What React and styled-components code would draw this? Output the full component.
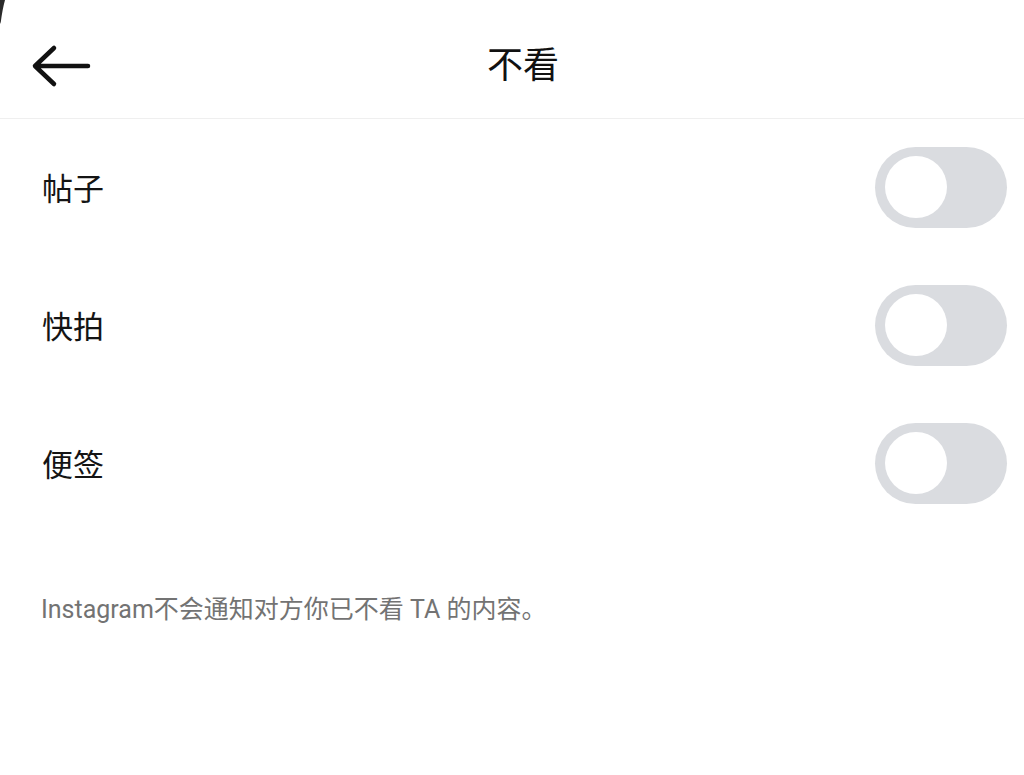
import React, { useState } from "react";
import styled, { createGlobalStyle } from "styled-components";

const Global = createGlobalStyle`
  html, body { margin: 0; padding: 0; background: #ffffff; }
  body { font-family: Roboto, "Noto Sans CJK SC", sans-serif; }
`;

const Page = styled.div`
  position: relative;
  width: 1024px;
  height: 775px;
  background: #ffffff;
  overflow: hidden;
`;

const CornerMark = styled.svg`
  position: absolute;
  left: 0;
  top: 0;
`;

const Header = styled.header`
  position: relative;
  height: 118px;
  display: flex;
  align-items: center;
  justify-content: center;
  border-bottom: 1px solid #efefef;
`;

const BackButton = styled.button`
  position: absolute;
  left: 30px;
  top: 44px;
  width: 62px;
  height: 46px;
  padding: 0;
  border: none;
  background: none;
  display: flex;
  align-items: center;
  justify-content: center;
`;

const Title = styled.h1`
  margin: 0;
  font-family: "Noto Sans CJK SC", sans-serif;
  font-size: 36px;
  font-weight: 400;
  color: #111111;
  line-height: 1;
  transform: translate(11px, 3px);
`;

const List = styled.div`
  display: flex;
  flex-direction: column;
`;

const Row = styled.div`
  height: 138px;
  display: flex;
  align-items: center;
  justify-content: space-between;
  padding: 0 17px 0 42px;
`;

const Label = styled.span`
  font-family: "Noto Sans CJK SC", sans-serif;
  font-size: 31px;
  color: #141414;
  line-height: 1;
  transform: translateY(-2px);
`;

const Track = styled.button`
  width: 132px;
  height: 81px;
  border-radius: 41px;
  border: none;
  padding: 0 10px;
  background: ${(p) => (p.$on ? "#0095f6" : "#dadce0")};
  display: flex;
  align-items: center;
  justify-content: ${(p) => (p.$on ? "flex-end" : "flex-start")};
  cursor: pointer;
  transform: translateY(-1px);
`;

const Knob = styled.span`
  width: 62px;
  height: 62px;
  border-radius: 50%;
  background: #ffffff;
`;

const Note = styled.p`
  margin: 0;
  padding: 60px 0 0 41px;
  font-family: Roboto, "Noto Sans CJK SC", sans-serif;
  font-size: 25px;
  line-height: 34px;
  color: #737373;
`;

const items = ["帖子", "快拍", "便签"];

export default function App() {
  const [state, setState] = useState([false, false, false]);
  return (
    <Page>
      <Global />
      <CornerMark width="6" height="24" viewBox="0 0 6 24">
        <path d="M0 0 L5 0 Q2.5 9 0.8 22 L0 24 Z" fill="#2a2a2a" />
      </CornerMark>
      <Header>
        <BackButton aria-label="返回">
          <svg width="62" height="46" viewBox="0 0 62 46">
            <path
              d="M5 22 H58 M24 4 L5 22 L24 40"
              fill="none"
              stroke="#111111"
              strokeWidth="4.5"
              strokeLinecap="round"
              strokeLinejoin="round"
            />
          </svg>
        </BackButton>
        <Title>不看</Title>
      </Header>
      <List>
        {items.map((t, i) => (
          <Row key={t}>
            <Label>{t}</Label>
            <Track
              $on={state[i]}
              onClick={() =>
                setState((s) => s.map((v, j) => (j === i ? !v : v)))
              }
            >
              <Knob />
            </Track>
          </Row>
        ))}
      </List>
      <Note>Instagram不会通知对方你已不看 TA 的内容。</Note>
    </Page>
  );
}
